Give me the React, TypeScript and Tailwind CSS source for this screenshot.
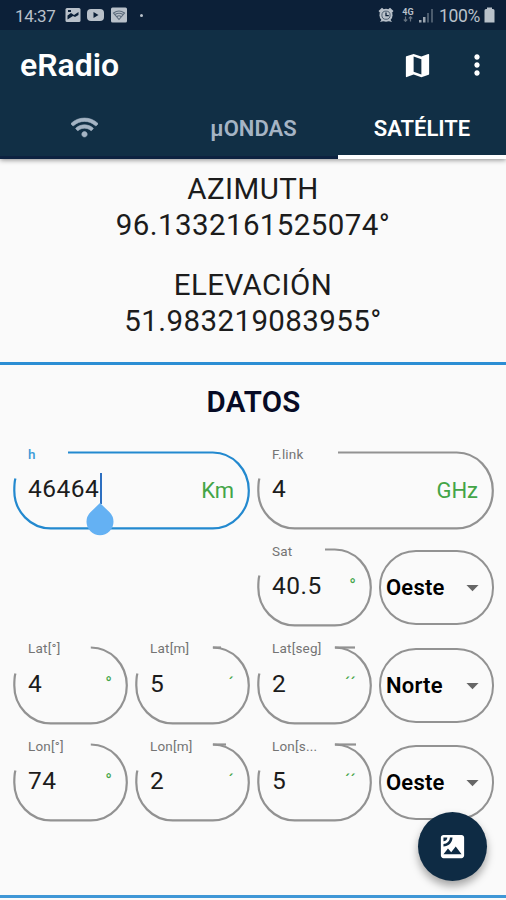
import { clsx } from "clsx";
import { FaWifi } from "react-icons/fa";
import { MdArrowDropDown, MdMap, MdMoreVert, MdSatellite } from "react-icons/md";

type OutlineProps = {
  width: number;
  // start and end of the top stroke, measured from the left edge
  notch: number;
  topEnd?: number;
  focused?: boolean;
};

type FieldProps = Omit<OutlineProps, "width"> & {
  label: string;
  value: string;
  suffix: string;
  width?: number;
};

function Outline({ width, notch, topEnd, focused }: OutlineProps) {
  const right = width - 1.2;
  const arc = right - 36;
  const start = Math.min(notch, arc);

  return (
    <svg
      className={clsx(
        "absolute inset-0",
        focused ? "text-[#2389cf]" : "text-[#929292]",
      )}
      width={width}
      height={79}
      fill="none"
      stroke="currentColor"
      strokeWidth={2.2}
    >
      <path
        d={`M2.4 27.5 C1.4 31 1.3 34 1.3 39.5 A36.5 37.7 0 0 0 38 77.4 H${arc} A36 37.7 0 0 0 ${right} 39.5 A36 38 0 0 0 ${arc} 1.5 H${start}`}
      />
      {topEnd ? <path d={`M${notch} 1.5 H${topEnd}`} /> : null}
    </svg>
  );
}

function Field({ label, value, suffix, width = 115, notch, topEnd, focused }: FieldProps) {
  const isUnit = /[a-z]/i.test(suffix);

  return (
    <div
      className={clsx("relative h-[79px] shrink-0", width > 115 ? "w-[237px]" : "w-[115px]")}
    >
      <Outline width={width} notch={notch} topEnd={topEnd} focused={focused} />
      <div className="relative flex h-full flex-col pr-[16px] pl-[15px]">
        <span
          className={clsx(
            "-mt-[5.5px] h-4 text-[13.5px] leading-4 tracking-[0.2px] whitespace-nowrap",
            focused ? "font-medium text-[#3d9ad8]" : "text-[#747474]",
          )}
        >
          {label}
        </span>
        <div className="mt-[13.5px] flex h-7 items-center justify-between">
          <span className="relative text-[24.5px] leading-7 tracking-[0.5px] text-[#1c1c1c]">
            {value}
            {focused ? (
              <>
                <span className="absolute top-[-2px] -right-[3px] h-[31px] w-[2px] bg-[#2d6fc0]" />
                <svg
                  className="absolute top-[28px] -right-[14.5px]"
                  width={28}
                  height={33}
                  viewBox="0 0 28 33"
                  fill="#64b1f3"
                >
                  <path d="M14 0 L23.6 9.3 A13.5 13.5 0 1 1 4.4 9.3 Z" />
                </svg>
              </>
            ) : null}
          </span>
          <span
            className={clsx(
              "text-[#43a547]",
              isUnit ? "pt-[3px] text-[22px] leading-7" : "text-[18px] leading-6",
            )}
          >
            {suffix}
          </span>
        </div>
      </div>
    </div>
  );
}

function Select({ value }: { value: string }) {
  return (
    <div className="mt-[2px] flex h-[75px] w-[115px] shrink-0 items-center justify-between rounded-[37px] border-2 border-[#929292] pr-[5px] pl-[5px]">
      <span className="text-[22px] font-semibold tracking-[0.2px] text-black">{value}</span>
      <MdArrowDropDown className="text-[#666]" size={29} />
    </div>
  );
}

function StatusBar() {
  return (
    <div className="flex h-[30px] items-center bg-[#0c2038] pr-[11px] pl-[15px] text-[#b9c1ca]">
      <span className="w-[42px] pt-px text-[17px] leading-5 tracking-[-0.4px]">14:37</span>
      <svg className="ml-[8px]" width={64} height={16} viewBox="0 0 64 16" fill="currentColor">
        <rect x="0.5" y="1" width="15" height="14" rx="1.5" />
        <path d="M2.5 12.5 V8.5 L6 6 L9 8 L13.5 5 V8 L10 10 L8 9 Z M3 3 H6 V5 H3 Z" fill="#0c2038" />
        <rect x="22" y="2" width="17" height="12" rx="4" />
        <path d="M28.5 5 L33.5 8 L28.5 11 Z" fill="#0c2038" />
        <rect x="46" y="0.5" width="16" height="15" rx="1.5" />
        <path
          d="M48.5 6 Q54 2 59.5 6 L54 12.5 Z M50 7.5 Q54 5 58 7.5 M52 9.5 Q54 8 56 9.5"
          fill="none"
          stroke="#5d6c7d"
          strokeWidth="1.1"
        />
      </svg>
      <span className="ml-[11px] size-[3px] rounded-full bg-current" />

      <svg className="ml-auto" width={16} height={16} viewBox="0 0 16 16" fill="currentColor">
        <path d="M0.5 4 L4 0.8 L6 2.4 L2 5.8 Z M15.5 4 L12 0.8 L10 2.4 L14 5.8 Z M2 15 L4 12 L6 14 Z M14 15 L12 12 L10 14 Z" />
        <circle cx="8" cy="8.2" r="6.5" />
        <circle cx="8" cy="8.2" r="4.1" fill="none" stroke="#33465a" strokeWidth="0.8" />
        <path d="M8 5.4 V8.6 H10.8" fill="none" stroke="#0c2038" strokeWidth="1.3" />
      </svg>
      <div className="ml-[8px] flex w-[12px] flex-col items-center">
        <span className="text-[9px] leading-[8px] font-bold">4G</span>
        <svg width={10} height={6} viewBox="0 0 10 6" fill="none" stroke="#64717f" strokeWidth="1.2">
          <path d="M2.5 0.5 V5 M0.8 3.5 L2.5 5.3 L4.2 3.5 M7.5 5.5 V1 M5.8 2.5 L7.5 0.7 L9.2 2.5" />
        </svg>
      </div>
      <svg className="ml-[4px]" width={16} height={15} viewBox="0 0 16 15">
        <path d="M1 12 H3.5 V14.5 H1 Z M5 9 H7.5 V14.5 H5 Z" fill="#9ba5b0" />
        <path d="M9 5 H11 V14.5 H9 Z M13 1 H15 V14.5 H13 Z" fill="#4b5b6d" />
      </svg>
      <span className="ml-[5px] pt-px text-[17.5px] leading-5 tracking-[-0.3px]">100%</span>
      <svg className="ml-[4px]" width={11} height={16} viewBox="0 0 11 16" fill="currentColor">
        <path d="M3 0.5 H8 V2 H9 Q10.5 2 10.5 3.5 V15.5 H0.5 V3.5 Q0.5 2 2 2 H3 Z" />
      </svg>
    </div>
  );
}

export default function App() {
  return (
    <div className="relative h-[900px] w-[506px] overflow-hidden bg-[#fafafa] font-['Roboto',sans-serif]">
      <header className="relative shadow-[0_1px_5px_rgba(0,0,0,0.45)]">
        <StatusBar />
        <div className="h-[129px] bg-[#112f45]">
          <div className="flex h-[70px] items-center pl-[20px] text-white">
            <h1 className="text-[32px] font-semibold">eRadio</h1>
            <MdMap className="ml-auto" size={31} />
            <MdMoreVert className="ml-[28px]" size={32} />
            <div className="w-[13px]" />
          </div>
          <nav className="grid h-[59px] grid-cols-[169px_169px_168px] text-[22px] font-medium text-[#a5b4c4]">
            <div className="flex items-center justify-center border-b-[3px] border-[#0d2240] pb-[2px]">
              <FaWifi size={27} stroke="currentColor" strokeWidth={14} />
            </div>
            <div className="flex items-center justify-center border-b-[3px] border-[#0d2240] font-semibold">
              µONDAS
            </div>
            <div className="flex items-center justify-center border-b-[4px] border-white pt-[2px] font-semibold text-white">
              SATÉLITE
            </div>
          </nav>
        </div>
      </header>

      <section className="h-[206px] border-b-[3px] border-[#2b8ed4] pt-[12px] text-center text-[29.5px] leading-9 tracking-[0.4px] text-[#1c1c1c]">
        <p>AZIMUTH</p>
        <p>96.1332161525074°</p>
        <p className="mt-[24px]">ELEVACIÓN</p>
        <p>51.983219083955°</p>
      </section>

      <section className="h-[533px] border-b-[3px] border-[#3f97d6] pr-[12px] pl-[13px]">
        <h2 className="pt-[19px] text-center text-[29.5px] leading-9 font-semibold tracking-[0.2px] text-[#070b25]">
          DATOS
        </h2>
        <div className="mt-[31px] flex flex-col gap-[18.4px]">
          <div className="flex gap-[7px]">
            <Field label="h" value="46464" suffix="Km" width={237} notch={55} focused />
            <Field label="F.link" value="4" suffix="GHz" width={237} notch={81} />
          </div>
          <div className="flex justify-end gap-[7px]">
            <Field label="Sat" value="40.5" suffix="°" notch={68} />
            <Select value="Oeste" />
          </div>
          <div className="flex gap-[7px]">
            <Field label="Lat[°]" value="4" suffix="°" notch={79} />
            <Field label="Lat[m]" value="5" suffix="´" notch={78} topEnd={86} />
            <Field label="Lat[seg]" value="2" suffix="´´" notch={78} topEnd={98} />
            <Select value="Norte" />
          </div>
          <div className="flex gap-[7px]">
            <Field label="Lon[°]" value="74" suffix="°" notch={79} />
            <Field label="Lon[m]" value="2" suffix="´" notch={78} topEnd={91} />
            <Field label="Lon[s..." value="5" suffix="´´" notch={78} topEnd={99} />
            <Select value="Oeste" />
          </div>
        </div>
      </section>

      <button className="absolute right-[19px] bottom-[19px] flex size-[69px] items-center justify-center rounded-full bg-[#0e2b44] text-white shadow-[0_5px_9px_rgba(0,0,0,0.35)]">
        <MdSatellite size={31} />
      </button>
    </div>
  );
}
